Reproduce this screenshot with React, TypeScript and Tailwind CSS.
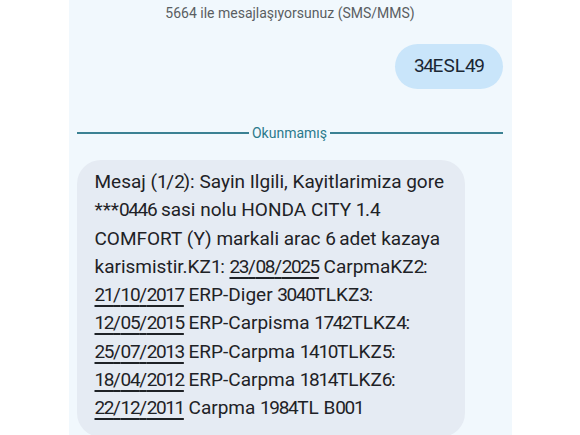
import React from "react";

const T = ({ s }: { s: string }) => {
  const parts = s.split(/(\d+)/);
  return (
    <>
      {parts.map((p, i) =>
        /^\d+$/.test(p) ? (
          <span key={i} className="tracking-[-1.4px]">
            {p}
          </span>
        ) : (
          <React.Fragment key={i}>{p}</React.Fragment>
        )
      )}
    </>
  );
};

const U = ({ s }: { s: string }) => (
  <span className="underline decoration-[1.5px] underline-offset-[4px] tracking-[-0.3px]">
    <T s={s} />
  </span>
);

export default function App() {
  const lines: React.ReactNode[] = [
    <T s="Mesaj (1/2): Sayin Ilgili, Kayitlarimiza gore" />,
    <T s="***0446 sasi nolu HONDA CITY 1.4" />,
    <T s="COMFORT (Y) markali arac 6 adet kazaya" />,
    <>
      <T s="karismistir.KZ1: " />
      <U s="23/08/2025" />
      <T s=" CarpmaKZ2:" />
    </>,
    <>
      <U s="21/10/2017" />
      <T s=" ERP-Diger 3040TLKZ3:" />
    </>,
    <>
      <U s="12/05/2015" />
      <T s=" ERP-Carpisma 1742TLKZ4:" />
    </>,
    <>
      <U s="25/07/2013" />
      <T s=" ERP-Carpma 1410TLKZ5:" />
    </>,
    <>
      <U s="18/04/2012" />
      <T s=" ERP-Carpma 1814TLKZ6:" />
    </>,
    <>
      <U s="22/12/2011" />
      <T s=" Carpma 1984TL B001" />
    </>,
  ];
  return (
    <div
      className="w-[580px] h-[435px] overflow-hidden bg-white"
      style={{ fontFamily: "Roboto, 'Noto Sans', sans-serif" }}
    >
      <div className="mx-auto w-[443px] h-full bg-[#f1f8fd] px-[8px] pt-[3px] flex flex-col">
        <div className="h-[28px] flex items-center justify-center text-[14px] text-[#5a5e62]">
          5664 ile mesajlaşıyorsunuz (SMS/MMS)
        </div>
        <div className="mt-[20px] flex justify-end pr-[1px]">
          <div className="h-[45px] px-[19px] rounded-full bg-[#c9e5fa] flex items-center text-[19px] text-[#1b2733]">
            <T s="34ESL49" />
          </div>
        </div>
        <div className="mt-[37px] h-[20px] flex items-center gap-[3px] pr-[1px]">
          <div className="flex-1 h-[2px] bg-[#3b8193]" />
          <span className="text-[14px] text-[#2b7a8c] leading-none">Okunmamış</span>
          <div className="flex-1 h-[2px] bg-[#3b8193]" />
        </div>
        <div className="mt-[20px] w-[388px] rounded-[24px] bg-[#e5ebf3] pl-[18px] pt-[8px] pb-[14px] text-[19px] leading-[28.3px] text-[#1e2226]">
          {lines.map((l, i) => (
            <div key={i} className="whitespace-nowrap">
              {l}
            </div>
          ))}
        </div>
      </div>
    </div>
  );
}
